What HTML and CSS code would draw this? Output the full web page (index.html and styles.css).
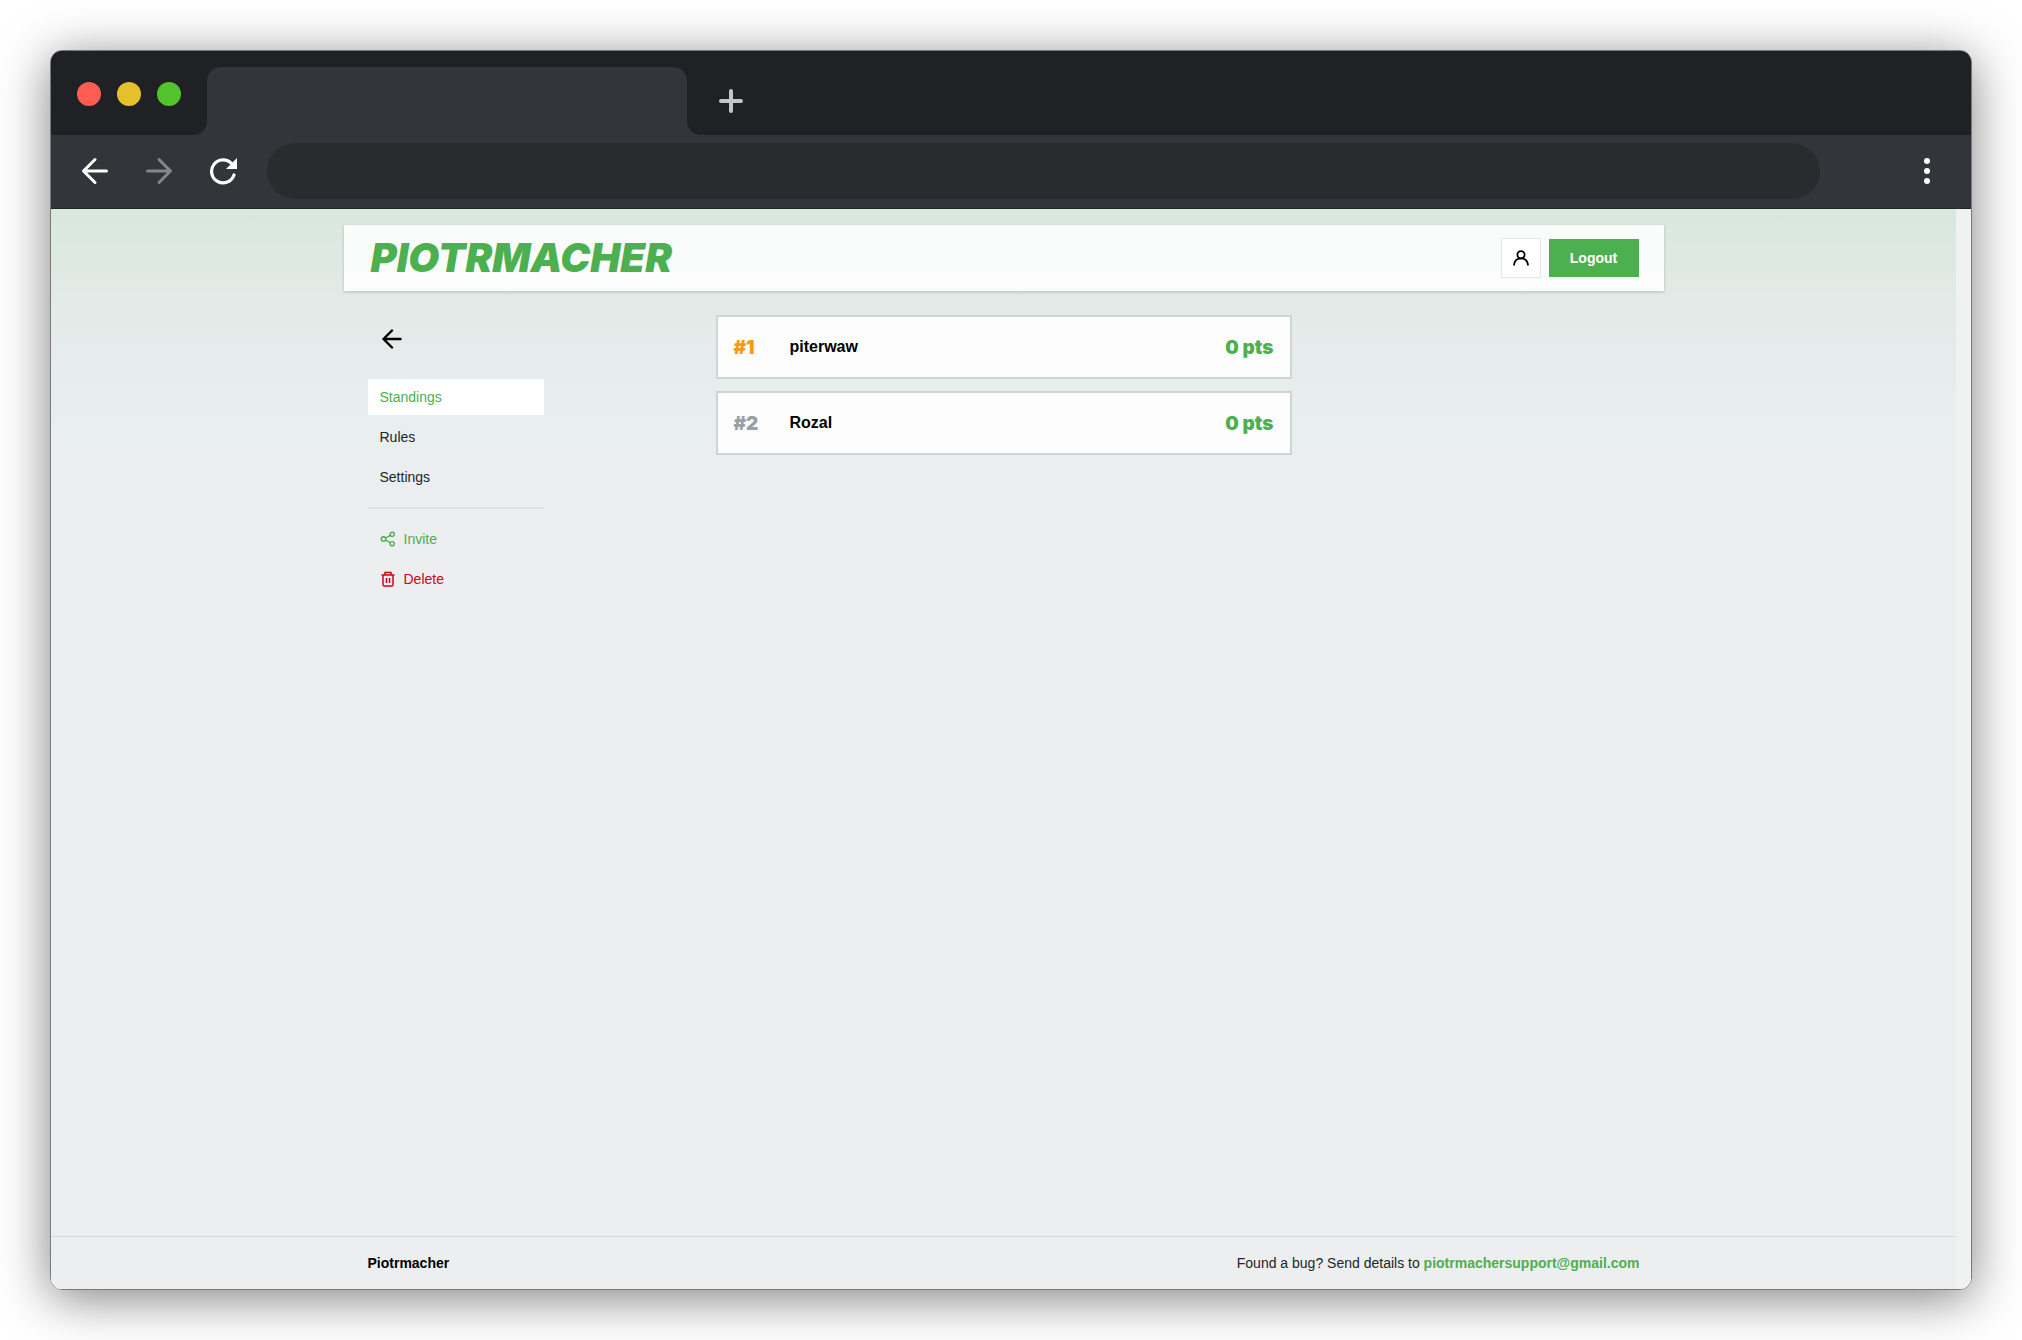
FILE: index.html
```html
<!doctype html>
<html lang="en">
<head>
<meta charset="utf-8">
<meta name="viewport" content="width=device-width, initial-scale=1">
<title>Piotrmacher</title>
<link rel="stylesheet" href="styles.css">
</head>
<body>
<div class="window">
  <div class="tabs">
    <div class="lights">
      <span class="light red"></span>
      <span class="light yellow"></span>
      <span class="light green"></span>
    </div>
    <div class="tab-slot"><div class="tab"></div></div>
    <div class="tabs-rest">
      <button class="chrome-btn" type="button" aria-label="New tab">
        <svg width="24" height="24" viewBox="0 0 24 24" fill="none" stroke="#c4c5c8" stroke-width="4" stroke-linecap="round"><path d="M12 2v20M2 12h20"/></svg>
      </button>
    </div>
  </div>
  <div class="toolbar">
    <button class="chrome-btn" type="button" aria-label="Back">
      <svg width="28" height="28" viewBox="0 0 28 28" fill="none" stroke="#fff" stroke-width="3" stroke-linecap="round" stroke-linejoin="round"><path d="M25.500 14H3M14 2.500L2.500 14L14 25.500"/></svg>
    </button>
    <button class="chrome-btn" type="button" aria-label="Forward">
      <svg width="28" height="28" viewBox="0 0 28 28" fill="none" stroke="#85878a" stroke-width="3" stroke-linecap="round" stroke-linejoin="round"><path d="M2.500 14H25M14 2.500L25.500 14L14 25.500"/></svg>
    </button>
    <button class="chrome-btn" type="button" aria-label="Reload">
      <svg width="28" height="28" viewBox="0 0 28 28"><path d="M22.500 6.500A11.500 11.500 0 1 0 25 18" fill="none" stroke="#fff" stroke-width="3.200" stroke-linecap="round"/><path d="M28 1v11H17z" fill="#fff"/></svg>
    </button>
    <input class="address" type="text" aria-label="Address">
    <button class="chrome-btn menu" type="button" aria-label="Menu">
      <svg width="6" height="26" viewBox="0 0 6 26" fill="#fff"><circle cx="3" cy="3" r="3"/><circle cx="3" cy="13" r="3"/><circle cx="3" cy="23" r="3"/></svg>
    </button>
  </div>

  <div class="viewport">
    <div class="page">
      <header class="header">
        <a class="logo" href="#">PIOTRMACHER</a>
        <div class="actions">
          <button class="user" type="button" aria-label="Account">
            <svg width="16" height="16" viewBox="0 0 16 16" fill="none" stroke="#000" stroke-width="1.800"><circle cx="8" cy="4.800" r="3.600"/><path d="M1 15.500C1.300 11 4 8.400 8 8.400s6.700 2.600 7 7.100"/></svg>
          </button>
          <button class="logout" type="button">Logout</button>
        </div>
      </header>

      <div class="content">
        <aside class="sidebar">
          <a class="back" href="#" aria-label="Back to leagues">
            <svg width="20" height="20" viewBox="0 0 20 20" fill="none" stroke="#000" stroke-width="2.400" stroke-linecap="round" stroke-linejoin="round"><path d="M18.500 10H1.500M10 1.500L1.500 10L10 18.500"/></svg>
          </a>
          <nav class="nav">
            <a class="item active" href="#">Standings</a>
            <a class="item" href="#">Rules</a>
            <a class="item" href="#">Settings</a>
          </nav>
          <div class="nav manage">
            <button class="item invite" type="button">
              <svg width="16" height="16" viewBox="0 0 16 16" fill="none" stroke="currentColor" stroke-width="1.400"><circle cx="3.500" cy="8" r="2.300"/><circle cx="12.200" cy="3.300" r="2.100"/><circle cx="12.200" cy="12.700" r="2.100"/><path d="M5.600 7L10.300 4.400M5.600 9L10.300 11.600"/></svg>
              Invite
            </button>
            <button class="item delete" type="button">
              <svg width="16" height="16" viewBox="0 0 16 16" fill="none" stroke="currentColor" stroke-width="1.500"><path d="M1.500 4h13M5 4V1.500h6V4M3 4v9.500a1.500 1.500 0 0 0 1.500 1.500h7a1.500 1.500 0 0 0 1.500-1.500V4M6.500 7v5M9.500 7v5"/></svg>
              Delete
            </button>
          </div>
        </aside>

        <main>
          <ol class="standings">
            <li class="row">
              <span class="place gold">#1</span>
              <span class="name">piterwaw</span>
              <span class="points">0 pts</span>
            </li>
            <li class="row">
              <span class="place silver">#2</span>
              <span class="name">Rozal</span>
              <span class="points">0 pts</span>
            </li>
          </ol>
        </main>
      </div>

      <footer class="footer">
        <div class="footer-in">
          <strong>Piotrmacher</strong>
          <span>Found a bug? Send details to <a class="mail" href="mailto:piotrmachersupport@gmail.com">piotrmachersupport@gmail.com</a></span>
        </div>
      </footer>
    </div>
  </div>
</div>
</body>
</html>
```
FILE: styles.css
```css
* {box-sizing: border-box;}
body {
	margin: 0;
	padding: 50px;
	min-height: 100vh;
	display: flex;
	background: #fff;
	color: #212529;
	font: 14px/20px "Liberation Sans", Arial, sans-serif;
}
a {color: inherit; text-decoration: none;}
button {
	font: inherit;
	padding: 0;
	border: 0;
	background: none;
	cursor: pointer;
}
svg {display: block; flex: none;}

/* ---------- window ---------- */
.window {
	flex: 1;
	min-width: 0;
	display: flex;
	flex-direction: column;
	overflow: hidden;
	border: 1px solid #77797b;
	border-radius: 12px;
	box-shadow: 0 8px 50px rgba(0, 0, 0, 0.5);
}
.tabs {
	display: flex;
	height: 84px;
	background: #323539;
}
.lights {
	display: flex;
	gap: 16px;
	width: 156px;
	padding: 31px 26px;
	background: #202124;
	border-bottom-right-radius: 14px;
}
.light {
	width: 24px;
	height: 24px;
	border-radius: 50%;
}
.red {background: #ff5c54;}
.yellow {background: #e6c02a;}
.green {background: #53c32b;}
.tab-slot {
	flex: 0 1 480px;
	padding-top: 16px;
	background: linear-gradient(#202124 40px, #323539 40px);
}
.tab {
	height: 68px;
	background: #323539;
	border-radius: 14px 14px 0 0;
}
.tabs-rest {
	flex: 1;
	display: flex;
	align-items: center;
	padding: 16px 32px 0;
	background: #202124;
	border-bottom-left-radius: 14px;
}
.toolbar {
	display: flex;
	align-items: center;
	gap: 36px;
	height: 74px;
	padding: 0 41px 2px 30px;
	background: #323539;
	border-bottom: 1px solid #232628;
}
.address {
	flex: 1;
	min-width: 0;
	height: 56px;
	margin-left: -6px;
	padding: 0 28px;
	border: 0;
	border-radius: 28px;
	background: #292c2f;
	color: #fff;
	font: inherit;
}
.menu {margin-left: 68px;}

/* ---------- page ---------- */
.viewport {
	flex: 1;
	display: flex;
	padding-right: 15px;
	background: #f0f1f1;
}
.page {
	flex: 1;
	min-width: 0;
	display: flex;
	flex-direction: column;
	padding-top: 16px;
	background: #edeef0 linear-gradient(#d8e8dd, #e4eae8 100px, #e9eeef 220px, #edeef0 330px);
}
.header {
	display: flex;
	align-items: center;
	justify-content: space-between;
	width: 100%;
	max-width: 1320px;
	height: 66px;
	margin: 0 auto;
	padding: 0 25px 0 27px;
	background: rgba(255, 255, 255, 0.85);
	box-shadow: 0 1px 3px rgba(0, 0, 0, 0.2);
}
.logo {
	color: #4caf50;
	font-family: Inter, "Liberation Sans", sans-serif;
	font-size: 40px;
	line-height: 48px;
	font-weight: 900;
	font-style: italic;
}
.actions {
	display: flex;
	align-items: center;
	gap: 8px;
}
.user {
	display: grid;
	place-items: center;
	width: 40px;
	height: 40px;
	border: 1px solid #e4e7e7;
	background: #fff;
}
.logout {
	width: 90px;
	height: 38px;
	background: #4caf50;
	color: #fff;
	font-weight: bold;
}
.content {
	flex: 1;
	display: grid;
	grid-template-columns: 1fr minmax(0, 576px) 1fr;
	align-items: start;
	width: 100%;
	max-width: 1320px;
	margin: 0 auto;
	padding: 24px;
}
.sidebar {width: 176px;}
.back {
	display: block;
	padding: 14px;
	margin-bottom: 16px;
}
.nav {
	display: flex;
	flex-direction: column;
	gap: 4px;
}
.item {
	display: flex;
	align-items: center;
	gap: 8px;
	height: 36px;
	padding: 0 12px;
	color: #212529;
}
.active {background: #fff; color: #4caf50;}
.manage {
	margin-top: 12px;
	padding-top: 12px;
	border-top: 2px solid #e0e3e4;
}
.invite {color: #4caf50;}
.delete {color: #d0021b;}

.standings {
	display: grid;
	gap: 12px;
	margin: 0;
	padding: 0;
	list-style: none;
}
.row {
	display: flex;
	align-items: center;
	height: 64px;
	padding: 0 16px;
	border: 2px solid #d1d4d4;
	background: #fdfdfd;
}
.place, .points {
	padding-top: 2px;
	font-family: Inter, "Liberation Sans", sans-serif;
	font-size: 19px;
	font-weight: 900;
}
.place {width: 56px;}
.gold {color: #f39c12;}
.silver {color: #9b9ea3;}
.name {
	flex: 1;
	color: #000;
	font-size: 16px;
	font-weight: bold;
}
.points {color: #4caf50;}

.footer {
	border-top: 1px solid #d5d8da;
	padding: 16px 0;
}
.footer-in {
	display: flex;
	justify-content: space-between;
	max-width: 1320px;
	margin: 0 auto;
	padding: 0 24px;
}
.footer strong {color: #000;}
.mail {color: #4caf50; font-weight: bold;}
```
